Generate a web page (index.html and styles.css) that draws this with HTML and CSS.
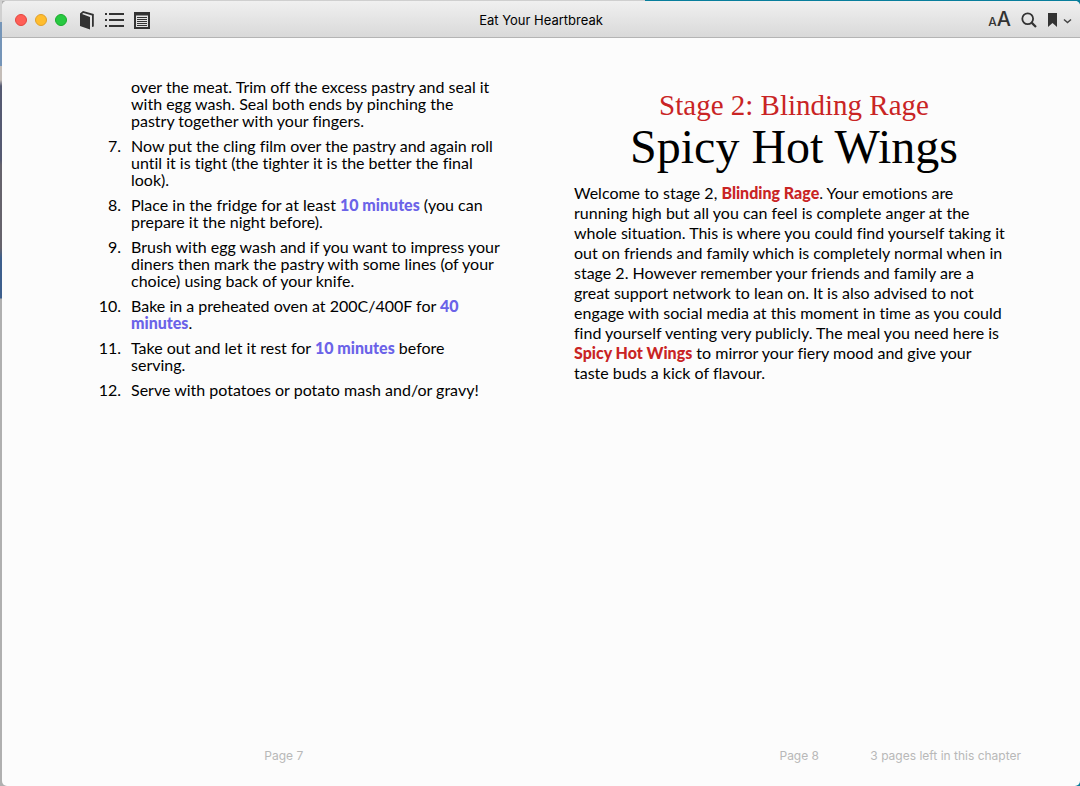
FILE: index.html
```html
<!DOCTYPE html>
<html lang="en">
<head>
  <meta charset="UTF-8">
  <meta name="viewport" content="width=device-width, initial-scale=1.0">
  <title>Eat Your Heartbreak</title>
  <link rel="stylesheet" href="styles.css">
</head>
<body>
  <div class="window">
    <header class="titlebar">
      <div class="tools">
        <div class="lights">
          <button class="light close" aria-label="Close"></button>
          <button class="light minimize" aria-label="Minimize"></button>
          <button class="light zoom" aria-label="Zoom"></button>
        </div>
        <button class="tool" aria-label="Library">
          <svg width="16" height="20" viewBox="0 0 16 20">
            <path d="M1 3.500 L4 1 L14.800 4 V16.500 L13 17 V5.500 L4.500 3 L3 4 L11 7 V19.600 L1 16 Z" fill="#333"/>
          </svg>
        </button>
        <button class="tool" aria-label="Table of contents">
          <svg width="19" height="16" viewBox="0 0 19 16" fill="#333">
            <path d="M0 1h2v2H0zM4 1h15v2H4zM0 7h2v2H0zM4 7h15v2H4zM0 13h2v2H0zM4 13h15v2H4z"/>
          </svg>
        </button>
        <button class="tool" aria-label="Notes">
          <svg width="16" height="17" viewBox="0 0 16 17">
            <path d="M1 1h14v15H1z" fill="none" stroke="#333" stroke-width="2"/>
            <path d="M1 2.5h14" stroke="#333" stroke-width="2"/>
            <path d="M3 5.5h10M3 7.5h10M3 9.5h10M3 11.5h10M3 13.5h10" stroke="#333"/>
          </svg>
        </button>
      </div>
      <h1 class="title">Eat Your Heartbreak</h1>
      <div class="tools tools-right">
        <button class="tool font-size" aria-label="Appearance"><span class="small-a">A</span><span class="big-a">A</span></button>
        <button class="tool" aria-label="Search">
          <svg width="16" height="16" viewBox="0 0 16 16" fill="none" stroke="#333">
            <circle cx="6.7" cy="6.7" r="5.4" stroke-width="1.8"/>
            <path d="M10.6 10.6 L15 15" stroke-width="2.2"/>
          </svg>
        </button>
        <button class="tool bookmark" aria-label="Bookmark">
          <svg width="25" height="16" viewBox="0 0 25 16">
            <path d="M1 1h9v14L5.500 11 1 15z" fill="#333"/>
            <path d="M17 7.500l3.500 3 3.500-3" fill="none" stroke="#444" stroke-width="1.500"/>
          </svg>
        </button>
      </div>
    </header>

    <main class="book">
      <section class="page">
        <ol class="steps" start="6">
          <li class="continued">over the meat. Trim off the excess pastry and seal it<br>
            with egg wash. Seal both ends by pinching the<br>
            pastry together with your fingers.</li>
          <li>Now put the cling film over the pastry and again roll until it is tight (the tighter it is the better the final look).</li>
          <li>Place in the fridge for at least <strong>10 minutes</strong> (you can prepare it the night before).</li>
          <li>Brush with egg wash and if you want to impress your diners then mark the pastry with some lines (of your choice) using back of your knife.</li>
          <li>Bake in a preheated oven at 200C/400F for <strong>40 minutes</strong>.</li>
          <li>Take out and let it rest for <strong>10 minutes</strong> before<br>
            serving.</li>
          <li>Serve with potatoes or potato mash and/or gravy!</li>
        </ol>
      </section>

      <article class="page">
        <h2 class="stage">Stage 2: Blinding Rage</h2>
        <h3 class="recipe">Spicy Hot Wings</h3>
        <p class="intro">
          Welcome to stage 2, <strong>Blinding Rage</strong>. Your emotions are<br>
          running high but all you can feel is complete anger at the<br>
          whole situation. This is where you could find yourself taking it<br>
          out on friends and family which is completely normal when in<br>
          stage 2. However remember your friends and family are a<br>
          great support network to lean on. It is also advised to not<br>
          engage with social media at this moment in time as you could<br>
          find yourself venting very publicly. The meal you need here is<br>
          <strong>Spicy Hot Wings</strong> to mirror your fiery mood and give your<br>
          taste buds a kick of flavour.
        </p>
      </article>
    </main>

    <footer class="folio">
      <p class="folio-left">Page 7</p>
      <div class="folio-right">
        <p class="number">Page 8</p>
        <p class="remaining">3 pages left in this chapter</p>
      </div>
    </footer>
  </div>
</body>
</html>
```
FILE: styles.css
```css
:root {
  --paper: #fcfcfc;
  --ink: #000;
  --icon: #333;
  --purple: #6b63e8;
  --red: #c92424;
  --folio: #b8b8b8;
}

* {
  margin: 0;
  padding: 0;
  box-sizing: border-box;
}

/* Desktop showing around the window */
body {
  min-height: 100vh;
  padding: 1px 0 0 2px;
  display: flex;
  background:
    linear-gradient(to right, #cfcfcf 0 645px, #087e9c 645px) top / 100% 1px no-repeat,
    linear-gradient(#d0d0d0 0 22px, #7595b8 22px 66px, #c4bdb8 66px 80px, #555a72 86px 160px, #66636c 165px 248px, #3d5f8d 258px 298px, #b0b0b0 299px) left / 2px 100% no-repeat,
    linear-gradient(to right, #b0b0b0 50%, #087e9c 50%);
  color: var(--ink);
  font-family: Lato, "Liberation Sans", sans-serif;
}

.window {
  flex: 1;
  display: flex;
  flex-direction: column;
  background: var(--paper);
  border-radius: 5px;
  overflow: hidden;
}

/* Title bar */
.titlebar {
  height: 37px;
  padding: 2px 8px 0;
  display: grid;
  grid-template-columns: 1fr auto 1fr;
  align-items: center;
  background: linear-gradient(#f0f0f0, #d9d9d9);
  border-bottom: 1px solid #b4b4b4;
}

.title {
  font-family: Inter, "Liberation Sans", sans-serif;
  font-size: 13px;
  font-weight: 400;
}

.tools {
  display: flex;
  align-items: center;
  gap: 10px;
}

.tools-right {
  justify-content: flex-end;
}

.lights {
  display: flex;
  gap: 8px;
  margin: 0 2px 0 5px;
}

button {
  border: none;
  background: none;
  cursor: pointer;
}

.light {
  width: 12px;
  height: 12px;
  border-radius: 50%;
}

.close {
  background: #ff5f57;
  border: 1px solid #e2463f;
}

.minimize {
  background: #ffbd2e;
  border: 1px solid #e0a02a;
}

.zoom {
  background: #28c941;
  border: 1px solid #1aab2c;
}

.tool {
  display: flex;
  align-items: center;
  color: var(--icon);
}

.font-size {
  align-items: baseline;
  font-family: Inter, "Liberation Sans", sans-serif;
  font-weight: 500;
  line-height: 24px;
}

.small-a {
  font-size: 12px;
}

.big-a {
  font-size: 20px;
}

/* Two page spread */
.book {
  flex: 1;
  padding: 40px 66px 0 60px;
  display: grid;
  grid-template-columns: 1fr 1fr;
  gap: 72px;
  font-variant-ligatures: no-common-ligatures;
}

.steps {
  padding-left: 69px;
  list-style: none;
  counter-reset: step 6;
  font-size: 16px;
  line-height: 17px;
}

.steps li {
  margin-bottom: 8px;
  counter-increment: step;
}

.steps .continued {
  counter-increment: none;
}

.steps li::before {
  content: counter(step) ".";
  float: left;
  width: 30px;
  margin-left: -40px;
  text-align: right;
}

.steps .continued::before {
  content: none;
}

.steps strong {
  color: var(--purple);
  font-weight: 900;
}

.stage,
.recipe {
  font-family: "Liberation Serif", serif;
  font-weight: 400;
  text-align: center;
}

.stage {
  padding-top: 9px;
  color: var(--red);
  font-size: 29px;
  line-height: 36px;
}

.recipe {
  font-size: 48px;
  line-height: 48px;
}

.intro {
  margin-top: 12px;
  font-size: 16px;
  line-height: 20px;
}

.intro strong {
  color: var(--red);
  font-weight: 900;
}

/* Page numbers */
.folio {
  padding: 0 59px 22px 60px;
  display: grid;
  grid-template-columns: 1fr 1fr;
  gap: 72px;
  color: var(--folio);
  font-family: Inter, "Liberation Sans", sans-serif;
  font-size: 12px;
  line-height: 16px;
}

.folio-left {
  text-align: center;
}

.folio-right {
  display: grid;
  grid-template-columns: 1fr auto 1fr;
}

.number {
  grid-column: 2;
}

.remaining {
  text-align: right;
}
```
